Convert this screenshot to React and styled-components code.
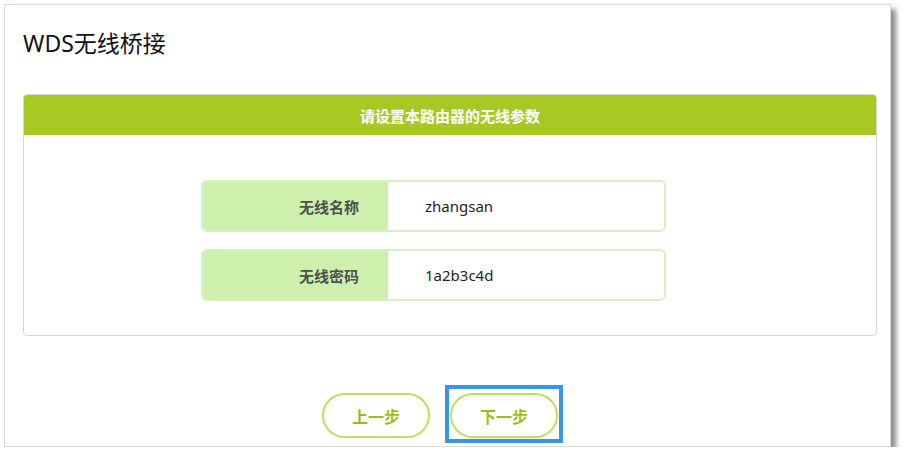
import React from "react";
import styled, { createGlobalStyle } from "styled-components";

const GlobalStyle = createGlobalStyle`
  body {
    margin: 0;
    background: #ffffff;
    font-family: "Noto Sans", "Noto Sans CJK SC", sans-serif;
  }
`;

const Frame = styled.div`
  box-sizing: border-box;
  margin: 4px 0 0 4px;
  width: 887px;
  height: 443px;
  border: 1px solid #d9d9d9;
  background: #fff;
  box-shadow: 5px 5px 5px rgba(0, 0, 0, 0.45);
  padding: 0 13px 0 18px;
  display: flex;
  flex-direction: column;
`;

const Title = styled.h1`
  margin: 0;
  padding-top: 22px;
  height: 89px;
  box-sizing: border-box;
  font-size: 23px;
  font-weight: 400;
  line-height: 32px;
  color: #111;
`;

const Panel = styled.section`
  box-sizing: border-box;
  height: 242px;
  border: 1px solid #d6d6d6;
  border-radius: 4px;
  overflow: hidden;
`;

const PanelHeader = styled.div`
  height: 40px;
  background: #a8c923;
  color: #fff;
  font-size: 15px;
  font-weight: 700;
  display: flex;
  align-items: center;
  justify-content: center;
`;

const Fields = styled.div`
  display: flex;
  flex-direction: column;
  gap: 17px;
  padding: 45px 0 0 177px;
`;

const Row = styled.div`
  box-sizing: border-box;
  width: 465px;
  height: 52px;
  border: 2px solid #d5f1bc;
  border-radius: 6px;
  display: flex;
  overflow: hidden;
`;

const Label = styled.div`
  width: 185px;
  background: #cdf0ad;
  color: #505050;
  font-size: 15px;
  font-weight: 700;
  display: flex;
  align-items: center;
  justify-content: flex-end;
  padding-right: 29px;
  box-sizing: border-box;
`;

const Value = styled.div`
  flex: 1;
  padding-left: 37px;
  font-size: 15px;
  color: #1e1e1e;
  display: flex;
  align-items: center;
`;

const Actions = styled.div`
  display: flex;
  justify-content: center;
  gap: 10px;
  padding: 49px 20px 0 0;
`;

const Ring = styled.div`
  display: flex;
  padding: 4px 1px 1px;
  border: 4px solid ${(p) => (p.$focused ? "#3796ea" : "transparent")};
`;

const Button = styled.button`
  box-sizing: border-box;
  width: 108px;
  height: 45px;
  border: 2px solid #c6dc5a;
  border-radius: 23px;
  background: #fff;
  color: #99bf16;
  font-family: "Noto Sans CJK SC", sans-serif;
  font-size: 16px;
  font-weight: 700;
  cursor: pointer;
  outline: none;
`;

export default function App() {
  return (
    <>
      <GlobalStyle />
      <Frame>
        <Title>WDS无线桥接</Title>
        <Panel>
          <PanelHeader>请设置本路由器的无线参数</PanelHeader>
          <Fields>
            <Row>
              <Label>无线名称</Label>
              <Value>zhangsan</Value>
            </Row>
            <Row>
              <Label>无线密码</Label>
              <Value>1a2b3c4d</Value>
            </Row>
          </Fields>
        </Panel>
        <Actions>
          <Ring>
            <Button>上一步</Button>
          </Ring>
          <Ring $focused>
            <Button>下一步</Button>
          </Ring>
        </Actions>
      </Frame>
    </>
  );
}
